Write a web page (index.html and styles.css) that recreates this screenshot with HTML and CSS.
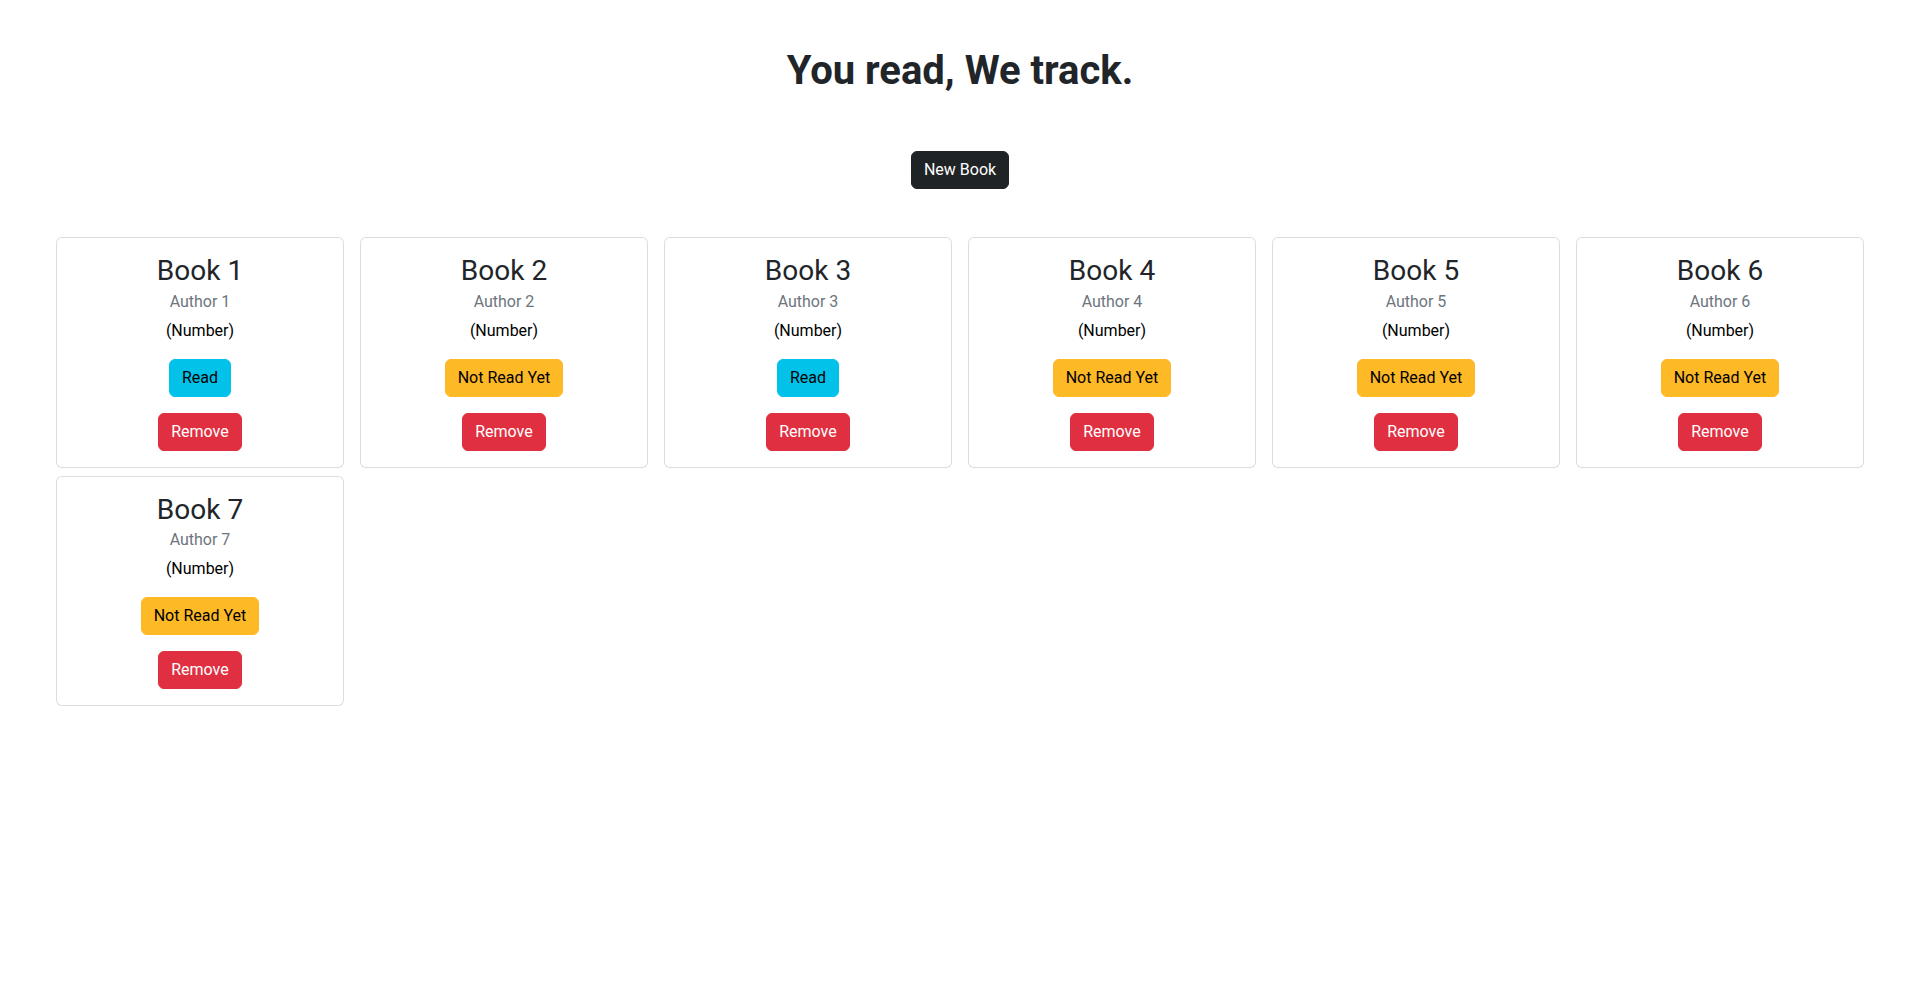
FILE: index.html
```html
<!DOCTYPE html>
<html lang="en">
<head>
<meta charset="utf-8">
<title>You read, We track.</title>
<link rel="stylesheet" href="styles.css">
</head>
<body>
<main class="page">
  <h1 class="headline">You read, We track.</h1>
  <div class="actions">
    <button class="btn btn-dark">New Book</button>
  </div>
  <section class="library">
    <article class="card">
      <h3 class="card-title">Book 1</h3>
      <div class="card-author">Author 1</div>
      <p class="card-pages">(Number)</p>
      <button class="btn btn-info">Read</button>
      <button class="btn btn-danger">Remove</button>
    </article>
    <article class="card">
      <h3 class="card-title">Book 2</h3>
      <div class="card-author">Author 2</div>
      <p class="card-pages">(Number)</p>
      <button class="btn btn-warning">Not Read Yet</button>
      <button class="btn btn-danger">Remove</button>
    </article>
    <article class="card">
      <h3 class="card-title">Book 3</h3>
      <div class="card-author">Author 3</div>
      <p class="card-pages">(Number)</p>
      <button class="btn btn-info">Read</button>
      <button class="btn btn-danger">Remove</button>
    </article>
    <article class="card">
      <h3 class="card-title">Book 4</h3>
      <div class="card-author">Author 4</div>
      <p class="card-pages">(Number)</p>
      <button class="btn btn-warning">Not Read Yet</button>
      <button class="btn btn-danger">Remove</button>
    </article>
    <article class="card">
      <h3 class="card-title">Book 5</h3>
      <div class="card-author">Author 5</div>
      <p class="card-pages">(Number)</p>
      <button class="btn btn-warning">Not Read Yet</button>
      <button class="btn btn-danger">Remove</button>
    </article>
    <article class="card">
      <h3 class="card-title">Book 6</h3>
      <div class="card-author">Author 6</div>
      <p class="card-pages">(Number)</p>
      <button class="btn btn-warning">Not Read Yet</button>
      <button class="btn btn-danger">Remove</button>
    </article>
    <article class="card">
      <h3 class="card-title">Book 7</h3>
      <div class="card-author">Author 7</div>
      <p class="card-pages">(Number)</p>
      <button class="btn btn-warning">Not Read Yet</button>
      <button class="btn btn-danger">Remove</button>
    </article>
  </section>
</main>
</body>
</html>
```

FILE: styles.css
```css
* { box-sizing: border-box; }

html, body {
  margin: 0;
  padding: 0;
  background: #fff;
}

body {
  font-family: Roboto, "Liberation Sans", sans-serif;
  font-size: 16px;
  line-height: 1.5;
  color: #212529;
}

.page {
  padding: 47px 56px 0;
}

.headline {
  margin: 0;
  font-size: 40px;
  line-height: 1.2;
  font-weight: 700;
  text-align: center;
  color: #212529;
}

.actions {
  display: flex;
  justify-content: center;
  margin-top: 56px;
}

.btn {
  display: inline-block;
  font-family: inherit;
  font-size: 16px;
  line-height: 24px;
  font-weight: 400;
  padding: 6px 12px;
  border: 1px solid transparent;
  border-radius: 6px;
  cursor: pointer;
}

.btn-dark {
  background: #1f2326;
  border-color: #1f2326;
  color: #fff;
}

.btn-info {
  background: #03c2ea;
  border-color: #03c2ea;
  color: #000;
}

.btn-warning {
  background: #feb927;
  border-color: #feb927;
  color: #000;
}

.btn-danger {
  background: #e02f40;
  border-color: #e02f40;
  color: #fff;
}

.library {
  display: grid;
  grid-template-columns: repeat(6, 1fr);
  column-gap: 16px;
  row-gap: 8px;
  margin-top: 48px;
}

.card {
  display: flex;
  flex-direction: column;
  align-items: center;
  padding: 16px;
  border: 1px solid rgba(0, 0, 0, 0.135);
  border-radius: 6px;
  background: #fff;
}

.card-title {
  margin: 0 0 2px;
  font-size: 28px;
  line-height: 1.2;
  font-weight: 400;
  color: #212529;
}

.card-author {
  color: #6c757d;
  margin-bottom: 5px;
}

.card-pages {
  margin: 0 0 16px;
  color: #000;
}

.card .btn + .btn {
  margin-top: 16px;
}
```
